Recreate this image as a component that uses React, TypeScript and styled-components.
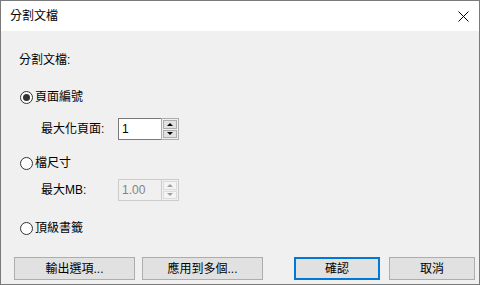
import styled, { createGlobalStyle, css } from "styled-components";

const GlobalStyle = createGlobalStyle`
  html, body {
    margin: 0;
    padding: 0;
    background: #f0f0f0;
  }
  body {
    font-family: "Liberation Sans", "Noto Sans CJK TC", sans-serif;
    font-size: 12px;
    color: #000;
  }
`;

const Window = styled.div`
  width: 480px;
  height: 285px;
  box-sizing: border-box;
  border: 1px solid #7a7a7a;
  display: flex;
  flex-direction: column;
  background: #f0f0f0;
`;

const TitleBar = styled.div`
  height: 30px;
  flex: none;
  background: #fff;
  display: flex;
  align-items: center;
  justify-content: space-between;
  padding: 0 10px 0 9px;
`;

const Title = styled.div`
  font-size: 12px;
  line-height: 16px;
`;

const CloseBtn = styled.div`
  width: 12px;
  height: 12px;
  display: grid;
  place-content: center;
`;

const Body = styled.div`
  flex: 1;
  display: flex;
  flex-direction: column;
  padding: 0 18px 0 18px;
`;

const SectionLabel = styled.div`
  margin-top: 21px;
  line-height: 16px;
`;

const Row = styled.div<{ $top: number; $indent?: number }>`
  margin-top: ${(p) => p.$top}px;
  padding-left: ${(p) => p.$indent ?? 0}px;
  display: flex;
  align-items: center;
`;

const RadioCircle = styled.span<{ $checked?: boolean }>`
  width: 13px;
  height: 13px;
  box-sizing: border-box;
  border-radius: 50%;
  border: 1px solid #333;
  background: #fff;
  margin: 0 2px 0 1px;
  display: grid;
  place-content: center;

  &::after {
    content: "";
    width: 7px;
    height: 7px;
    border-radius: 50%;
    background: ${(p) => (p.$checked ? "#333" : "transparent")};
  }
`;

const RadioText = styled.span`
  line-height: 16px;
`;

const FieldLabel = styled.span`
  width: 77px;
  line-height: 16px;
`;

const Spin = styled.div<{ $disabled?: boolean }>`
  display: flex;
  height: 22px;
  width: 61px;
`;

const SpinInput = styled.div<{ $disabled?: boolean }>`
  flex: 1;
  box-sizing: border-box;
  border: 1px solid ${(p) => (p.$disabled ? "#cccccc" : "#7a7a7a")};
  border-right: none;
  background: ${(p) => (p.$disabled ? "#f0f0f0" : "#fff")};
  color: ${(p) => (p.$disabled ? "#838383" : "#000")};
  font-size: 12px;
  line-height: 20px;
  padding-left: ${(p) => (p.$disabled ? "3px" : "3px")};
`;

const SpinButtons = styled.div<{ $disabled?: boolean }>`
  width: 18px;
  box-sizing: border-box;
  border: 1px solid ${(p) => (p.$disabled ? "#cccccc" : "#adadad")};
  background: ${(p) => (p.$disabled ? "#f0f0f0" : "#f0f0f0")};
  display: flex;
  flex-direction: column;
  padding: 1px;
  gap: 1px;
`;

const arrowBase = css`
  flex: 1;
  box-sizing: border-box;
  display: grid;
  place-content: center;
`;

const SpinArrow = styled.div<{ $disabled?: boolean }>`
  ${arrowBase};
  border: 1px solid ${(p) => (p.$disabled ? "#dcdcdc" : "#adadad")};
  background: ${(p) => (p.$disabled ? "#f4f4f4" : "#e1e1e1")};
`;

const Triangle = styled.span<{ $down?: boolean; $disabled?: boolean }>`
  width: 0;
  height: 0;
  border-left: 3px solid transparent;
  border-right: 3px solid transparent;
  ${(p) =>
    p.$down
      ? css`border-top: 3px solid ${p.$disabled ? "#a0a0a0" : "#000"};`
      : css`border-bottom: 3px solid ${p.$disabled ? "#a0a0a0" : "#000"};`}
`;

const ButtonBar = styled.div`
  margin-top: 21px;
  display: flex;
  margin-left: -5px;
  margin-right: -14px;
`;

const Button = styled.div<{ $primary?: boolean; $w: number; $gap?: number }>`
  width: ${(p) => p.$w}px;
  height: 23px;
  margin-left: ${(p) => p.$gap ?? 0}px;
  box-sizing: border-box;
  border: ${(p) => (p.$primary ? "2px solid #0078d7" : "1px solid #adadad")};
  background: #e1e1e1;
  display: grid;
  place-content: center;
  font-size: 12px;
  line-height: 16px;
`;

function SpinBox({ value, disabled }: { value: string; disabled?: boolean }) {
  return (
    <Spin $disabled={disabled}>
      <SpinInput $disabled={disabled}>{value}</SpinInput>
      <SpinButtons $disabled={disabled}>
        <SpinArrow $disabled={disabled}>
          <Triangle $disabled={disabled} />
        </SpinArrow>
        <SpinArrow $disabled={disabled}>
          <Triangle $down $disabled={disabled} />
        </SpinArrow>
      </SpinButtons>
    </Spin>
  );
}

export default function App() {
  return (
    <>
      <GlobalStyle />
      <Window>
        <TitleBar>
          <Title>分割文檔</Title>
          <CloseBtn>
            <svg width="11" height="11" viewBox="0 0 11 11">
              <path d="M0.5 0.5 L10.5 10.5 M10.5 0.5 L0.5 10.5" stroke="#000" strokeWidth="1" fill="none" />
            </svg>
          </CloseBtn>
        </TitleBar>
        <Body>
          <SectionLabel>分割文檔:</SectionLabel>
          <Row $top={21}>
            <RadioCircle $checked />
            <RadioText>頁面編號</RadioText>
          </Row>
          <Row $top={13} $indent={22}>
            <FieldLabel>最大化頁面:</FieldLabel>
            <SpinBox value="1" />
          </Row>
          <Row $top={15}>
            <RadioCircle />
            <RadioText>檔尺寸</RadioText>
          </Row>
          <Row $top={8} $indent={22}>
            <FieldLabel>最大MB:</FieldLabel>
            <SpinBox value="1.00" disabled />
          </Row>
          <Row $top={19}>
            <RadioCircle />
            <RadioText>頂級書籤</RadioText>
          </Row>
          <ButtonBar>
            <Button $w={121}>輸出選項...</Button>
            <Button $w={121} $gap={7}>應用到多個...</Button>
            <Button $w={86} $gap={31} $primary>確認</Button>
            <Button $w={86} $gap={9}>取消</Button>
          </ButtonBar>
        </Body>
      </Window>
    </>
  );
}
